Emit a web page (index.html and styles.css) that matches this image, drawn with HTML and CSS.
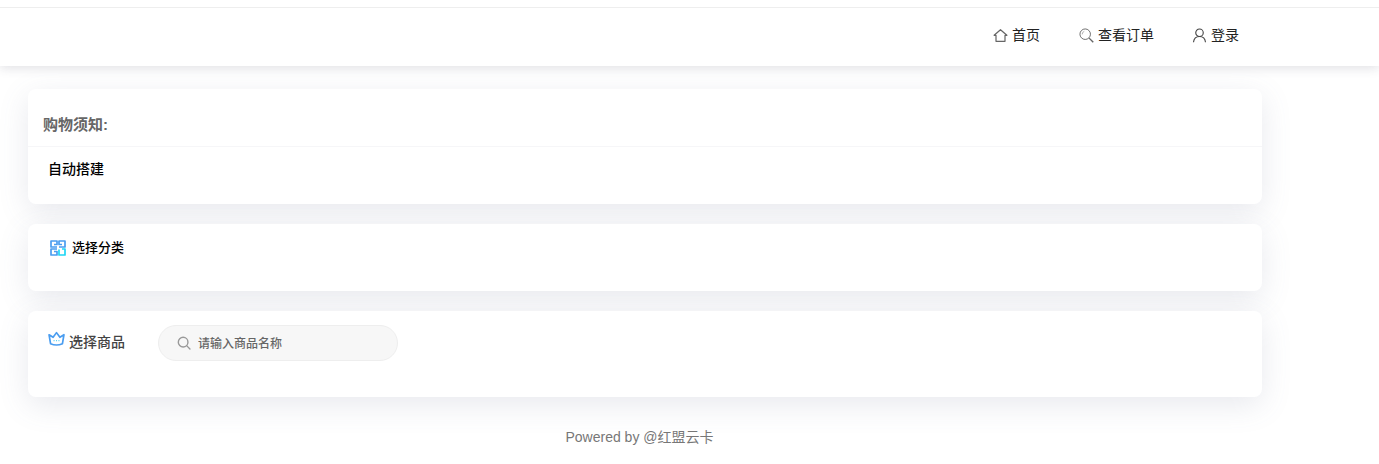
FILE: index.html
```html
<!DOCTYPE html>
<html lang="zh-CN">
<head>
  <meta charset="UTF-8" />
  <title>红盟云卡</title>
  <link rel="stylesheet" href="styles.css">
</head>
<body>
  <div class="top-strip"></div>
  <header class="nav-bar">
    <nav class="nav-links">
      <a class="nav-item nav-home">
        <svg class="nav-icon" viewBox="0 0 16 16"><path d="M1.200 7.800 8 1.800l6.800 6H12.800v6.400H3.200V7.800z" fill="none" stroke="#666" stroke-width="1.300" stroke-linejoin="round"/></svg>
        首页
      </a>
      <a class="nav-item nav-order">
        <svg class="nav-icon" viewBox="0 0 16 16"><circle cx="6.600" cy="6.600" r="5.600" fill="none" stroke="#666" stroke-width="1"/><path d="M3.400 6.800a3.200 3.200 0 0 1 2.200-3.200" fill="none" stroke="#aaa" stroke-width="1"/><path d="m10.800 10.800 4.400 4.400" stroke="#666" stroke-width="1.500"/></svg>
        查看订单
      </a>
      <a class="nav-item nav-login">
        <svg class="nav-icon" viewBox="0 0 16 16"><circle cx="8" cy="5" r="4" fill="none" stroke="#444" stroke-width="1.200"/><path d="M1.600 15.200c.4-3.800 2.900-6.200 6.400-6.200s6 2.400 6.400 6.200" fill="none" stroke="#444" stroke-width="1.200"/></svg>
        登录
      </a>
    </nav>
  </header>

  <main class="container">
    <!-- notice -->
    <section class="card card-notice">
      <h2 class="notice-title">购物须知:</h2>
      <p class="notice-body">自动搭建</p>
    </section>

    <!-- category -->
    <section class="card card-category">
      <div class="section-label">
        <svg class="label-icon" viewBox="0 0 16 16">
          <path d="M7 7H1V1h6v3.500H4" fill="none" stroke="#4a9df0" stroke-width="1.700" stroke-linejoin="round"/>
          <path d="M7 9H1v6h6v-3.500H4" fill="none" stroke="#4a9df0" stroke-width="1.700" stroke-linejoin="round"/>
          <path d="M9 7h6V1H9v3.500h3" fill="none" stroke="#4a9df0" stroke-width="1.700" stroke-linejoin="round"/>
          <path d="M9 9.500V15h6V9h-3" fill="none" stroke="#1fd6f5" stroke-width="1.700" stroke-linejoin="round"/>
        </svg>
        选择分类
      </div>
    </section>

    <!-- goods -->
    <section class="card card-goods">
      <div class="section-label goods-label">
        <svg class="label-icon" viewBox="0 0 16 14">
          <path d="M1 3 4.800 5.400 8 1l3.200 4.400L15 3l-1.400 8.400c-3.600 1.600-7.600 1.600-11.200 0z" fill="none" stroke="#4a9df0" stroke-width="1.600" stroke-linejoin="round"/>
          <path d="M5.200 8.500h1M7.500 8.500h1M9.800 8.500h1" stroke="#5fd0f5" stroke-width="1.200"/>
        </svg>
        <span>选择商品</span>
      </div>
      <label class="search-box">
        <svg class="search-icon" viewBox="0 0 16 16"><circle cx="7" cy="7" r="5.500" fill="none" stroke="#999" stroke-width="1.600"/><path d="m11 11 3.800 3.800" stroke="#999" stroke-width="1.600" stroke-linecap="round"/></svg>
        <input class="search-input" type="text" placeholder="请输入商品名称" />
      </label>
    </section>
  </main>

  <footer class="page-foot">Powered by @红盟云卡</footer>
</body>
</html>
```

FILE: styles.css
```css
/* ---------- reset ---------- */
*,*::before,*::after{box-sizing:border-box;}
body{
  margin:0;
  background:#fff;
  color:#000;
  font-family:"Liberation Sans","Noto Sans CJK SC",sans-serif;
  font-size:14px;
}

/* ---------- header ---------- */
.top-strip{
  position:relative;
  z-index:1;
  height:8px;
  background:#fff;
  border-bottom:1px solid #eeeeee;
}
.nav-bar{
  position:relative;
  height:58px;
  background:#fff;
  box-shadow:0 2px 10px rgba(60,60,90,.16);
  display:flex;
  justify-content:flex-end;
  padding-right:140px;
}
.nav-links{display:flex;align-items:center;padding-bottom:4px;}
.nav-item{
  display:flex;
  align-items:center;
  gap:4px;
  color:#222;
  font-size:14px;
  line-height:20px;
}
.nav-order{margin-left:39px;}
.nav-login{margin-left:38px;}
.nav-icon{width:15px;height:15px;}

/* ---------- cards ---------- */
.container{
  width:1234px;
  margin:23px 0 0 28px;
  display:grid;
  gap:20px;
}
.card{
  background:#fff;
  border-radius:8px;
  box-shadow:0 8px 30px rgba(100,110,140,.15);
}
.card-notice{height:115px;}
.card-category{height:67px;padding:15px 22px;}
.card-goods{
  height:86px;
  padding:14px 20px;
  display:flex;
  align-items:flex-start;
}

.notice-title{
  margin:0;
  height:58px;
  padding:26px 15px 0;
  border-bottom:1px solid #f6f6f8;
  color:#666;
  font-size:15px;
  line-height:20px;
  font-weight:700;
}
.notice-body{
  margin:0;
  padding:12px 20px 0;
  font-size:14px;
  line-height:20px;
  font-weight:500;
}

.section-label{
  display:flex;
  align-items:center;
  gap:6px;
  font-size:13px;
  line-height:18px;
  font-weight:500;
}
.label-icon{width:16px;height:16px;}
.goods-label{
  color:#444;
  width:110px;
  padding-top:8px;
  gap:4px;
  font-size:14px;
  align-items:flex-start;
}
.goods-label .label-icon{width:17px;margin-top:-2px;}

/* ---------- search ---------- */
.search-box{
  width:240px;
  height:36px;
  display:flex;
  align-items:center;
  gap:7px;
  padding-left:18px;
  background:#f7f7f7;
  border:1px solid #eeeeee;
  border-radius:18px;
}
.search-icon{width:14px;height:14px;flex-shrink:0;}
.search-input{
  flex:1;
  min-width:0;
  border:0;
  outline:0;
  padding:2px 0 0;
  background:transparent;
  font-family:inherit;
  font-size:12px;
  font-weight:500;
  color:#666;
}
.search-input::placeholder{color:#666;opacity:1;}

/* ---------- footer ---------- */
.page-foot{
  width:1279px;
  margin-top:31px;
  text-align:center;
  color:#777;
  font-size:14px;
  line-height:18px;
}
```
